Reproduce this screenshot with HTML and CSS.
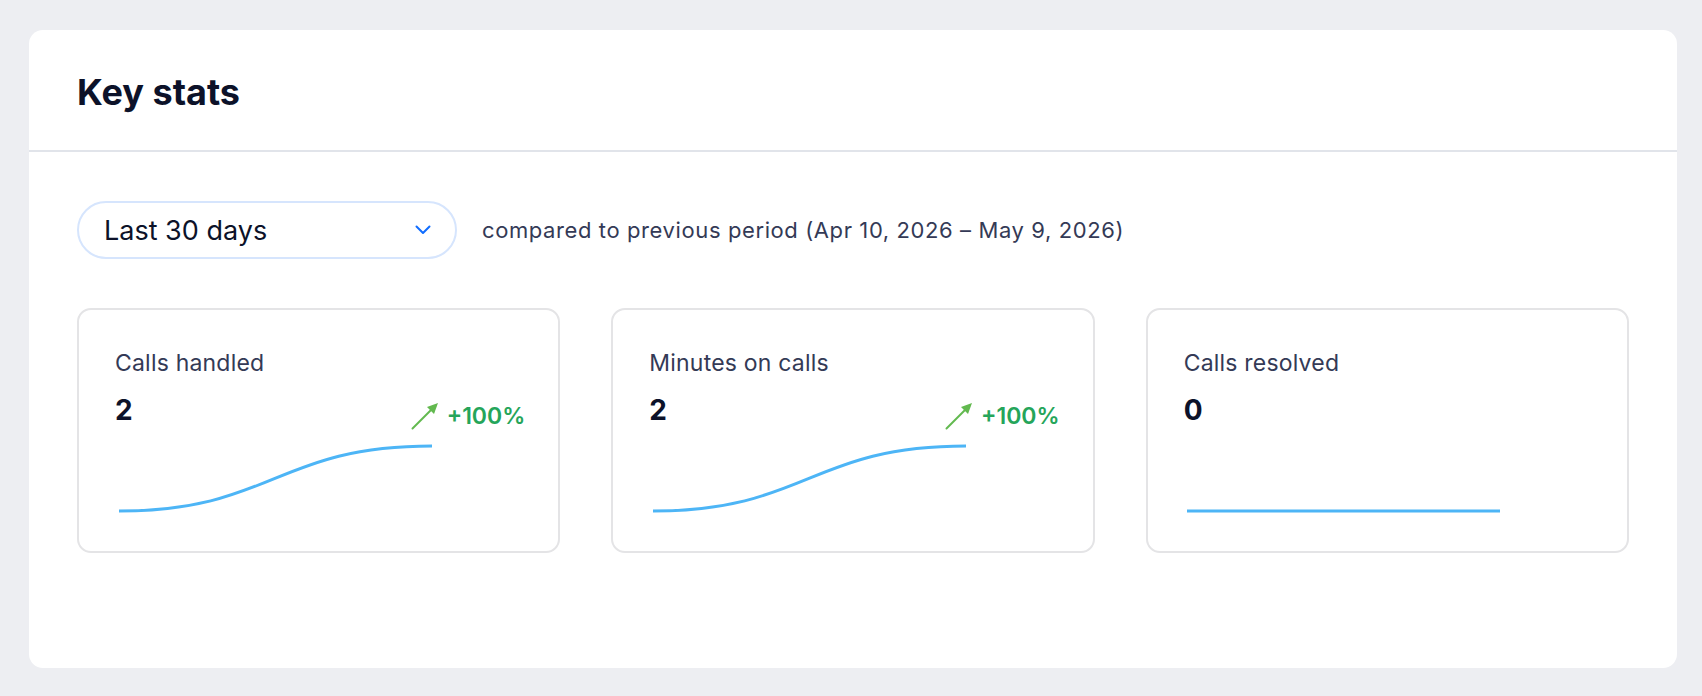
FILE: index.html
```html
<!DOCTYPE html>
<html lang="en">
  <head>
    <meta charset="UTF-8" />
    <meta name="viewport" content="width=device-width, initial-scale=1.0" />
    <title>Key stats</title>
    <link rel="stylesheet" href="styles.css">
  </head>
  <body>
    <section class="panel">
      <header class="panel-header">
        <h1>Key stats</h1>
      </header>

      <div class="panel-body">
        <div class="period-row">
          <button class="period-select" type="button">
            <span>Last 30 days</span>
            <svg class="chevron" width="16" height="10" viewBox="0 0 16 10">
              <path d="M1.5 1.5 L8 8 L14.5 1.5" fill="none" stroke="#116dff" stroke-width="2" stroke-linecap="round" stroke-linejoin="round" />
            </svg>
          </button>
          <span class="period-note">compared to previous period (Apr 10, 2026 – May 9, 2026)</span>
        </div>

        <div class="stats">
          <div class="stat-card">
            <div class="stat-label">Calls handled</div>
            <div class="stat-row">
              <div class="stat-value">2</div>
              <div class="trend">
                <svg width="28" height="28" viewBox="0 0 28 28">
                  <path d="M1.5 26.5 L21 7" stroke="#62b94f" stroke-width="2" stroke-linecap="round" />
                  <path d="M27 1 L16 5 L23 12 Z" fill="#62b94f" />
                </svg>
                <span>+100%</span>
              </div>
            </div>
            <svg class="spark" width="330" height="84" viewBox="0 0 330 84">
              <path d="M4 75 C158 75, 161 10, 317 10" fill="none" stroke="#4db5f6" stroke-width="3" />
            </svg>
          </div>

          <div class="stat-card">
            <div class="stat-label">Minutes on calls</div>
            <div class="stat-row">
              <div class="stat-value">2</div>
              <div class="trend">
                <svg width="28" height="28" viewBox="0 0 28 28">
                  <path d="M1.5 26.5 L21 7" stroke="#62b94f" stroke-width="2" stroke-linecap="round" />
                  <path d="M27 1 L16 5 L23 12 Z" fill="#62b94f" />
                </svg>
                <span>+100%</span>
              </div>
            </div>
            <svg class="spark" width="330" height="84" viewBox="0 0 330 84">
              <path d="M4 75 C158 75, 161 10, 317 10" fill="none" stroke="#4db5f6" stroke-width="3" />
            </svg>
          </div>

          <div class="stat-card">
            <div class="stat-label">Calls resolved</div>
            <div class="stat-row">
              <div class="stat-value">0</div>
            </div>
            <svg class="spark" width="330" height="84" viewBox="0 0 330 84">
              <path d="M3 75 L316 75" fill="none" stroke="#4db5f6" stroke-width="3" />
            </svg>
          </div>
        </div>
      </div>
    </section>
  </body>
</html>
```

FILE: styles.css
```css
body {
  margin: 0;
  padding: 30px 25px 29px 29px;
  background-color: #edeef2;
  font-family: Inter, "Noto Sans", sans-serif;
  color: #0c1229;
}
.panel {
  background: #ffffff;
  border-radius: 14px;
}
.panel-header {
  height: 122px;
  display: flex;
  align-items: center;
  padding: 4px 48px 0;
  box-sizing: border-box;
  border-bottom: 2px solid #e1e4ea;
}
h1 {
  margin: 0;
  font-size: 36px;
  font-weight: 700;
  color: #0c1229;
}
.panel-body {
  padding: 49px 48px 115px;
}
.period-row {
  display: flex;
  align-items: center;
  gap: 25px;
}
.period-select {
  width: 380px;
  height: 58px;
  display: flex;
  align-items: center;
  justify-content: space-between;
  padding: 0 24px 0 25px;
  border: 2px solid #d6e5fd;
  border-radius: 30px;
  background: #ffffff;
  font-family: inherit;
  font-size: 27px;
  color: #0c1229;
  box-sizing: border-box;
}
.period-note {
  font-size: 22px;
  letter-spacing: 0.6px;
  color: #343a56;
}
.stats {
  display: grid;
  grid-template-columns: repeat(3, 1fr);
  gap: 51px;
  margin-top: 49px;
}
.stat-card {
  border: 2px solid #e4e4e6;
  border-radius: 14px;
  padding: 38px 36px 31px 36px;
}
.stat-label {
  font-size: 23px;
  line-height: 30px;
  letter-spacing: 0.2px;
  color: #343a56;
}
.stat-row {
  display: flex;
  justify-content: space-between;
  align-items: flex-end;
  margin-top: 14px;
  height: 36px;
}
.stat-value {
  font-size: 28px;
  line-height: 36px;
  font-weight: 700;
}
.trend {
  display: flex;
  align-items: center;
  gap: 8px;
  margin: 0 -3px -3px 0;
  font-size: 23px;
  line-height: 30px;
  font-weight: 600;
  color: #25a55a;
}
.spark {
  display: block;
  margin-top: 8px;
}
```
